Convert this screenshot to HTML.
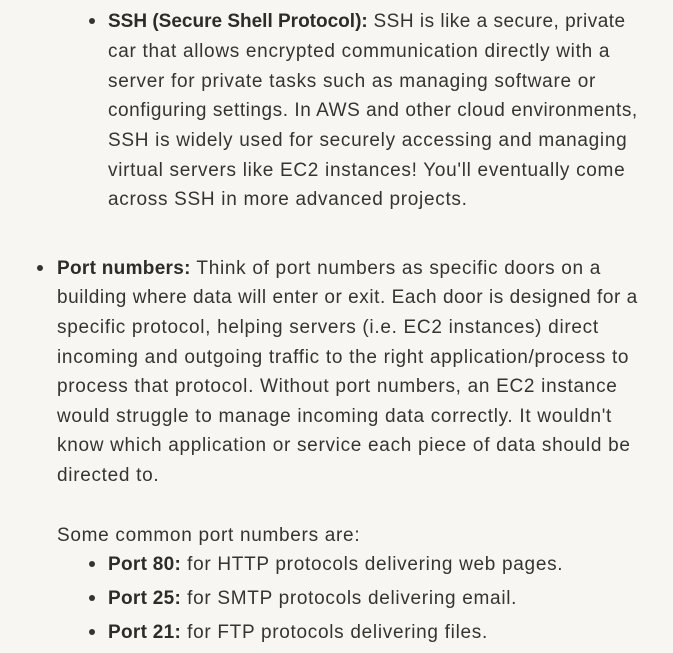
<!DOCTYPE html>
<html><head><meta charset="utf-8"><style>
body{margin:0;background:#f8f6f2;width:673px;height:653px;overflow:hidden;position:relative;font-family:"Liberation Sans",sans-serif;font-size:19px;letter-spacing:0.7px;color:#37332f}
.l{position:absolute;white-space:nowrap;line-height:29px;height:29px}
b{font-weight:bold;color:#2f2b27;letter-spacing:0.3px}
.d{position:absolute;width:6px;height:6px;border-radius:50%;background:#37332f}
</style></head><body>
<div class="d" style="left:89px;top:18px"></div>
<div class="l" style="left:108px;top:7px;letter-spacing:0.5px"><b style="letter-spacing:0">SSH (Secure Shell Protocol):</b> SSH is like a secure, private</div>
<div class="l" style="left:108px;top:37px">car that allows encrypted communication directly with a</div>
<div class="l" style="left:108px;top:67px">server for private tasks such as managing software or</div>
<div class="l" style="left:108px;top:96px;letter-spacing:0.55px">configuring settings. In AWS and other cloud environments,</div>
<div class="l" style="left:108px;top:126px">SSH is widely used for securely accessing and managing</div>
<div class="l" style="left:108px;top:156px">virtual servers like EC2 instances! You'll eventually come</div>
<div class="l" style="left:108px;top:185px">across SSH in more advanced projects.</div>

<div class="d" style="left:37px;top:265px"></div>
<div class="l" style="left:57px;top:254px"><b>Port numbers:</b> Think of port numbers as specific doors on a</div>
<div class="l" style="left:57px;top:283px;letter-spacing:0.55px">building where data will enter or exit. Each door is designed for a</div>
<div class="l" style="left:57px;top:313px">specific protocol, helping servers (i.e. EC2 instances) direct</div>
<div class="l" style="left:57px;top:343px">incoming and outgoing traffic to the right application/process to</div>
<div class="l" style="left:57px;top:372px">process that protocol. Without port numbers, an EC2 instance</div>
<div class="l" style="left:57px;top:402px">would struggle to manage incoming data correctly. It wouldn't</div>
<div class="l" style="left:57px;top:431px">know which application or service each piece of data should be</div>
<div class="l" style="left:57px;top:461px">directed to.</div>
<div class="l" style="left:57px;top:521px">Some common port numbers are:</div>
<div class="d" style="left:89px;top:561px"></div>
<div class="l" style="left:108px;top:550px"><b>Port 80:</b> for HTTP protocols delivering web pages.</div>
<div class="d" style="left:89px;top:595px"></div>
<div class="l" style="left:108px;top:584px"><b>Port 25:</b> for SMTP protocols delivering email.</div>
<div class="d" style="left:89px;top:629px"></div>
<div class="l" style="left:108px;top:618px"><b>Port 21:</b> for FTP protocols delivering files.</div>
</body></html>
